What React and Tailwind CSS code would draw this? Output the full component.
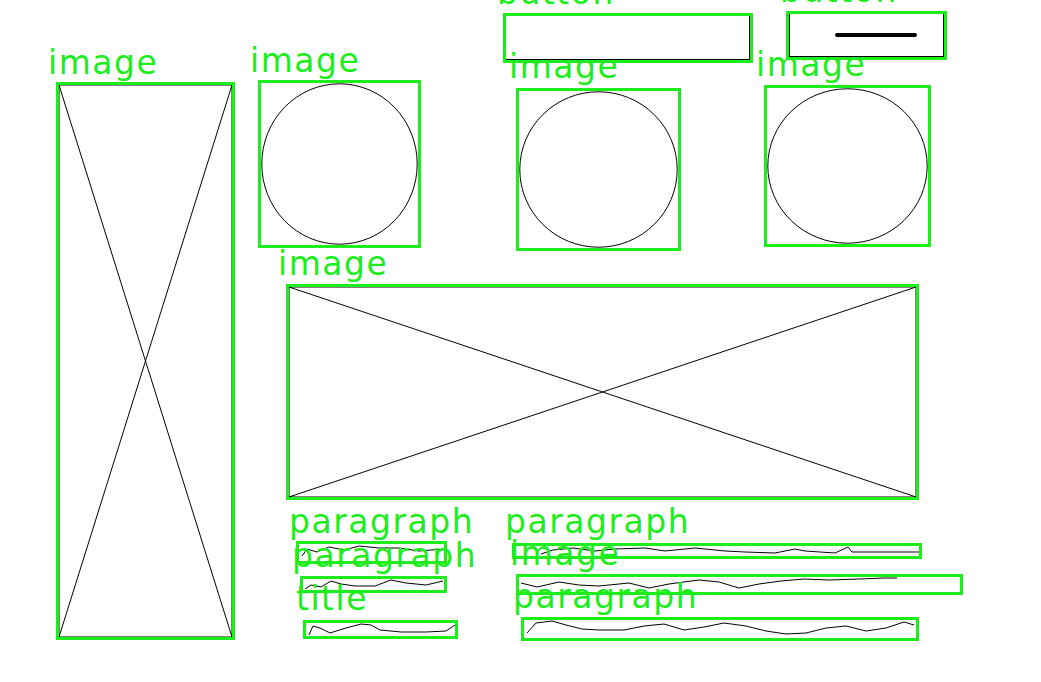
import React from "react";

// wireframe annotation canvas: each box sits at its detected position
const green = "border-[3px] border-[#1ded1d]";

const CrossImage = () => (
  <svg className="w-full h-full" viewBox="0 0 100 100" preserveAspectRatio="none">
    <rect x="0" y="0" width="100" height="100" fill="none" stroke="#000" strokeWidth="1" vectorEffect="non-scaling-stroke" />
    <line x1="0" y1="0" x2="100" y2="100" stroke="#000" strokeWidth="1" vectorEffect="non-scaling-stroke" />
    <line x1="100" y1="0" x2="0" y2="100" stroke="#000" strokeWidth="1" vectorEffect="non-scaling-stroke" />
  </svg>
);

const CircleImage = () => (
  <svg className="w-full h-full" viewBox="0 0 100 100" preserveAspectRatio="none">
    <ellipse cx="50" cy="50" rx="49.5" ry="49.5" fill="none" stroke="#000" strokeWidth="1" vectorEffect="non-scaling-stroke" />
  </svg>
);

const Squiggle = ({ w, h, points }) => (
  <svg className="w-full h-full" viewBox={`0 0 ${w} ${h}`} preserveAspectRatio="none">
    <polyline points={points} fill="none" stroke="#000" strokeWidth="1" />
  </svg>
);

const Label = ({ className, children }) => (
  <div
    className={`absolute text-[33px] leading-none tracking-[1.5px] text-[#1ded1d] font-['DejaVu_Sans',sans-serif] whitespace-nowrap ${className}`}
  >
    {children}
  </div>
);

export default function App() {
  return (
    <div className="relative w-[1041px] h-[682px] bg-white overflow-hidden">
      {/* tall image on the left */}
      <div className={`absolute left-[56px] top-[82px] w-[179px] h-[558px] ${green}`}>
        <CrossImage />
      </div>
      <Label className="left-[48px] top-[46px]">image</Label>

      {/* round images */}
      <div className={`absolute left-[258px] top-[80px] w-[163px] h-[168px] ${green}`}>
        <CircleImage />
      </div>
      <Label className="left-[250px] top-[44px]">image</Label>

      <div className={`absolute left-[516px] top-[88px] w-[165px] h-[163px] ${green}`}>
        <CircleImage />
      </div>
      <Label className="left-[509px] top-[50px]">image</Label>

      <div className={`absolute left-[764px] top-[85px] w-[167px] h-[162px] ${green}`}>
        <CircleImage />
      </div>
      <Label className="left-[756px] top-[48px]">image</Label>

      {/* buttons */}
      <div className={`absolute left-[503px] top-[13px] w-[250px] h-[50px] ${green}`}>
        <div className="w-full h-full border-r border-b border-black" />
      </div>
      <Label className="left-[497px] top-[-24px]">button</Label>

      <div className={`absolute left-[786px] top-[11px] w-[161px] h-[49px] ${green}`}>
        <div className="w-full h-full border-l border-r border-b border-black flex items-center justify-center pl-[18px]">
          <div className="w-[82px] h-[4px] bg-black rounded-full" />
        </div>
      </div>
      <Label className="left-[780px] top-[-26px]">button</Label>

      {/* wide image */}
      <div className={`absolute left-[286px] top-[284px] w-[633px] h-[216px] ${green}`}>
        <CrossImage />
      </div>
      <Label className="left-[278px] top-[247px]">image</Label>

      {/* left text column */}
      <div className={`absolute left-[296px] top-[541px] w-[151px] h-[23px] ${green}`}>
        <Squiggle w={145} h={17} points="3,12 8,5 18,8 30,3 45,6 60,2 80,4 100,4 120,7 145,5" />
      </div>
      <Label className="left-[289px] top-[505px]">paragraph</Label>

      <div className={`absolute left-[300px] top-[576px] w-[147px] h-[17px] ${green}`}>
        <Squiggle w={141} h={11} points="2,10 8,6 18,8 28,2 38,5 52,7 72,7 88,1 103,4 123,6 140,2" />
      </div>
      <Label className="left-[292px] top-[539px]">paragraph</Label>

      <div className={`absolute left-[303px] top-[620px] w-[155px] h-[19px] ${green}`}>
        <Squiggle w={149} h={13} points="3,12 7,3 14,5 24,10 40,5 55,1 65,2 74,7 95,9 120,9 140,8 149,2" />
      </div>
      <Label className="left-[296px] top-[582px]">title</Label>

      {/* right text column */}
      <div className={`absolute left-[512px] top-[543px] w-[410px] h-[16px] ${green}`}>
        <Squiggle w={404} h={10} points="26,8 38,4 58,2 80,5 100,3 130,2 150,5 180,2 210,5 230,6 260,7 280,3 290,5 320,7 333,1 337,6 370,6 404,6" />
      </div>
      <Label className="left-[505px] top-[505px]">paragraph</Label>

      <div className={`absolute left-[516px] top-[574px] w-[447px] h-[21px] ${green}`}>
        <Squiggle w={441} h={15} points="2,6 18,10 40,5 60,8 80,9 110,6 130,11 150,7 180,3 200,5 220,11 240,7 262,4 285,2 310,3 340,2 365,1 378,1" />
      </div>
      <Label className="left-[510px] top-[537px]">image</Label>

      <div className={`absolute left-[521px] top-[617px] w-[398px] h-[24px] ${green}`}>
        <Squiggle w={392} h={18} points="3,13 12,3 28,1 42,5 58,9 75,10 100,10 120,6 140,4 160,10 180,7 200,3 222,6 242,11 262,14 282,13 302,8 322,6 342,11 362,8 380,2 390,5" />
      </div>
      <Label className="left-[513px] top-[580px]">paragraph</Label>
    </div>
  );
}
